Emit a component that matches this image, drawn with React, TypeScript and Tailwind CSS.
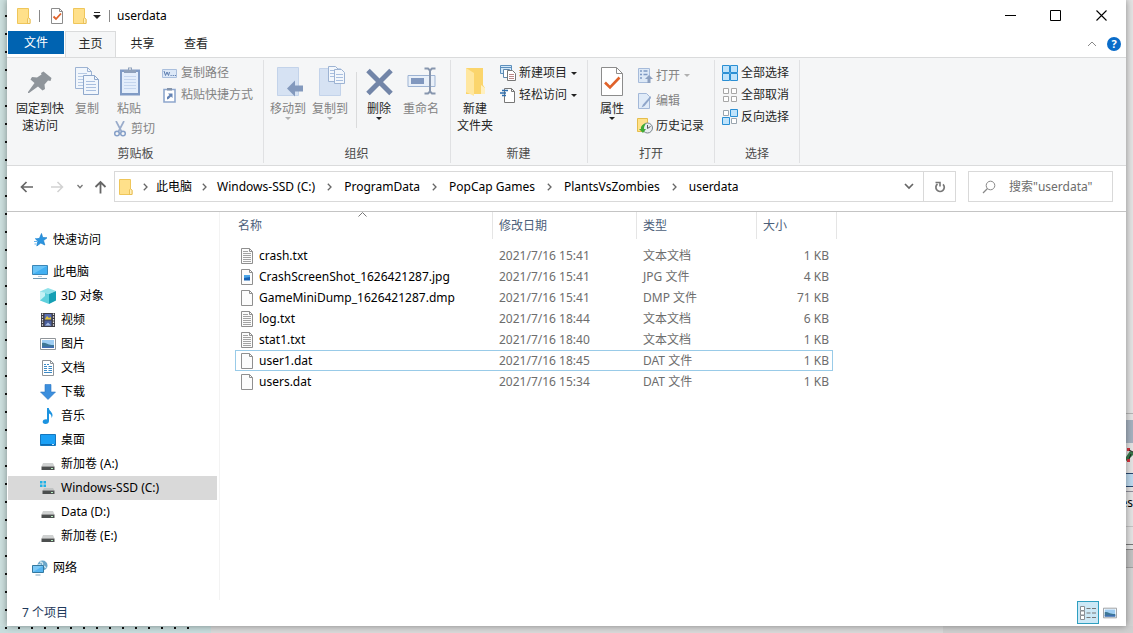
import type { ReactNode } from 'react';
import clsx from 'clsx';

type IconProps = { className?: string };

/* ---------- icons: title bar and address bar ---------- */

const FolderIcon = ({ className = 'h-4 w-4' }: IconProps) => (
  <svg viewBox="0 0 16 16" className={className}>
    <path d="M1.500.5h11v9l1.500 2v4H1.500z" fill="#ffe08a" stroke="#efc65a" />
    <path d="M12.500 9.500l-1 1.500v4.500h2.500v-4z" fill="#fff0bd" stroke="#e5b84a" strokeWidth=".8" />
  </svg>
);

const CheckDocIcon = ({ className = 'h-4 w-4' }: IconProps) => (
  <svg viewBox="0 0 16 16" className={className}>
    <path d="M2.500.5h8l3 3v12h-11z" fill="#fff" stroke="#8c8c8c" />
    <path d="M10.500.5v3h3" fill="none" stroke="#8c8c8c" />
    <path d="M4.500 8.500l2.500 2.500 5-5.500" fill="none" stroke="#e0622a" strokeWidth="1.800" />
  </svg>
);

const Caret = ({ className = 'text-[#222]' }: IconProps) => (
  <svg viewBox="0 0 6 3" className={clsx('h-[3px] w-[6px] shrink-0', className)}>
    <path d="M0 0h6L3 3z" fill="currentColor" />
  </svg>
);

const ChevronRight = () => (
  <svg viewBox="0 0 5 8" className="h-2 w-[5px]">
    <path d="M.8.8L4 4 .8 7.200" fill="none" stroke="#666" strokeWidth="1.300" />
  </svg>
);

/* ---------- icons: ribbon ---------- */

const PinIcon = () => (
  <svg viewBox="0 0 32 32" className="h-8 w-8">
    <path d="M19.500 5.500l8 6.500-1 3-2.500-.5-3.500 4 .5 4.500-2.500 1.500-4.500-4L5 27H4v-1l6.500-9-4-3.500L8 11l5 .5 4.500-3-.5-1.500z" fill="#8f959b" />
  </svg>
);

const CopyIcon = () => (
  <svg viewBox="0 0 32 32" className="h-8 w-8">
    <path d="M4.500 1.500h12l4 4v17h-16z" fill="#f1f6fc" stroke="#9db3d3" />
    <path d="M16.500 1.500v4h4" fill="none" stroke="#9db3d3" />
    <path d="M7 7.500h9M7 10.500h11M7 13.500h11M7 16.500h11M7 19.500h11" stroke="#b7cae4" />
    <path d="M12.500 9.500h11l4 4v15h-15z" fill="#f1f6fc" stroke="#8fa8cc" />
    <path d="M23.500 9.500v4h4" fill="none" stroke="#8fa8cc" />
    <path d="M15 15.500h9M15 18.500h10M15 21.500h10M15 24.500h10" stroke="#a9bfdf" />
  </svg>
);

const PasteIcon = () => (
  <svg viewBox="0 0 32 32" className="h-8 w-8">
    <path d="M7 3.500h20v26H7z" fill="#809bc5" />
    <path d="M9 6h16v21H9z" fill="#e4eefb" />
    <path d="M11 10.500h12M11 13.500h12M11 16.500h12M11 19.500h12M11 22.500h12" stroke="#c5d6ee" />
    <path d="M11 7V4h4V1.500h4V4h4v3z" fill="#8fa1bb" />
    <path d="M16 3h2" stroke="#fff" />
  </svg>
);

const ScissorsIcon = () => (
  <svg viewBox="0 0 16 16" className="h-4 w-4 shrink-0">
    <path d="M4 0l5.500 10.500M12 0L6.500 10.500" stroke="#9aaccb" strokeWidth="1.700" fill="none" />
    <circle cx="5" cy="12.500" r="2.300" fill="none" stroke="#86a0c8" strokeWidth="1.500" />
    <circle cx="11" cy="12.500" r="2.300" fill="none" stroke="#86a0c8" strokeWidth="1.500" />
  </svg>
);

const CopyPathIcon = () => (
  <svg viewBox="0 0 16 16" className="h-4 w-4 shrink-0">
    <path d="M.5 4.500h14v8H.5z" fill="#dce8f7" stroke="#aabfdd" />
    <path d="M2 6l1.500 4.500L5 7l1.500 3.500L7.500 7" fill="none" stroke="#5f7fb0" />
    <path d="M8.500 10.500h1.200M10.700 10.500h1.200M12.800 10.500H14" stroke="#5f7fb0" />
  </svg>
);

const PasteShortcutIcon = () => (
  <svg viewBox="0 0 16 16" className="h-4 w-4 shrink-0">
    <path d="M2 2.500h11v12.500H2z" fill="#fff" stroke="#8ea7cd" strokeWidth="1.600" />
    <path d="M5 1h5v2.500H5z" fill="#8494ab" />
    <path d="M5 12.500V10l2.500-2L6 6.500h4.500V11L9 9.500 6.500 12z" fill="#6282b4" />
  </svg>
);

const MoveToIcon = () => (
  <svg viewBox="0 0 32 32" className="h-8 w-8">
    <path d="M5.500 1.500h21v28h-21z" fill="#d6e2f3" stroke="#c3d3ea" />
    <path d="M15 22.500l8-8v5h8v6h-8v5z" fill="#8399bd" />
  </svg>
);

const CopyToIcon = () => (
  <svg viewBox="0 0 32 32" className="h-8 w-8">
    <path d="M5.500 2.500h21v27h-21z" fill="#d6e2f3" stroke="#c3d3ea" />
    <path d="M14.500.5h7l3 3v12h-10z" fill="#f3f7fc" stroke="#9db3d3" />
    <path d="M20.500 3.500h7l3 3v11h-10z" fill="#f3f7fc" stroke="#9db3d3" />
    <path d="M16 4.500h4M16 7.500h4M16 10.500h4M22 8.500h7M22 11.500h7M22 14.500h7" stroke="#a9bfdf" />
  </svg>
);

const DeleteIcon = () => (
  <svg viewBox="0 0 32 32" className="h-8 w-8">
    <path d="M5 4.500L28 27.500M28 4.500L5 27.500" stroke="#7285a8" strokeWidth="5" />
  </svg>
);

const RenameIcon = () => (
  <svg viewBox="0 0 32 32" className="h-8 w-8">
    <path d="M3 9.500h27v11H3z" fill="#e9f0f9" stroke="#9db3d3" />
    <path d="M6 12h13v6H6z" fill="#8198bf" />
    <path d="M25 4v22M19.500 2.500h3.500l2 2 2-2h3.500M19.500 27.500h3.500l2-2 2 2h3.500" fill="none" stroke="#8796ae" strokeWidth="2" />
  </svg>
);

const NewFolderIcon = () => (
  <svg viewBox="0 0 32 32" className="h-8 w-8">
    <path d="M7 2h17v17l2 3v6H7z" fill="#fbd56c" />
    <path d="M7 2l8 5v23l-8-4z" fill="#ffe7a0" />
    <path d="M22 19v9h4v-6z" fill="#fff0bf" />
  </svg>
);

const NewItemIcon = () => (
  <svg viewBox="0 0 16 16" className="h-4 w-4 shrink-0">
    <path d="M.5.5h11v8H.5z" fill="#d2e8f9" stroke="#5c8fbd" />
    <path d="M.5 2.500h11" stroke="#5c8fbd" />
    <path d="M3.500 4.500h6v8h-6z" fill="#fff" stroke="#5f87ac" />
    <path d="M7.500 5.500h5l3 3v7h-8z" fill="#fff" stroke="#777" />
    <path d="M9 9.500h5M9 11.500h5M9 13.500h5" stroke="#b88" />
  </svg>
);

const EasyAccessIcon = () => (
  <svg viewBox="0 0 16 16" className="h-4 w-4 shrink-0">
    <path d="M4.500 1.500h7l3 3v11h-10z" fill="#fff" stroke="#777" />
    <path d="M11.500 1.500v3h3" fill="none" stroke="#777" />
    <path d="M2 3.500h6M0 6h6M2 8.500h4" stroke="#2f6fae" strokeWidth="1.300" />
  </svg>
);

const PropertiesIcon = () => (
  <svg viewBox="0 0 32 32" className="h-8 w-8">
    <path d="M5.500 1.500h15l6 6v22h-21z" fill="#fff" stroke="#8c8c8c" />
    <path d="M20.500 1.500v6h6" fill="none" stroke="#8c8c8c" />
    <path d="M9 16.500l5 5 9.500-10" fill="none" stroke="#e0622a" strokeWidth="2.600" />
  </svg>
);

const OpenIcon = () => (
  <svg viewBox="0 0 16 16" className="h-4 w-4 shrink-0">
    <path d="M1.500.5h11v14h-11z" fill="#dde9f7" stroke="#a6bbda" />
    <path d="M3 3h2M3 6.500h2M3 10h2M6.500 3h4M6.500 6.500h4" stroke="#7f9ac4" strokeWidth="1.600" />
    <path d="M12 7l4 4h-2.500v4h-3v-4H8z" fill="#8ca0c0" />
  </svg>
);

const EditIcon = () => (
  <svg viewBox="0 0 16 16" className="h-4 w-4 shrink-0">
    <path d="M1.500.5h8l3 3v12h-11z" fill="#e0ebf8" stroke="#a3b8d8" />
    <path d="M13.500 3L6 11.500l-1.500 3 3-1.500L14 5z" fill="#8fa6ca" />
  </svg>
);

const HistoryIcon = () => (
  <svg viewBox="0 0 16 16" className="h-4 w-4 shrink-0">
    <path d="M.5.5h10v13H.5z" fill="#ffe28a" stroke="#e5bd4c" />
    <circle cx="10.500" cy="10" r="5" fill="#e8edf0" stroke="#7b858c" />
    <path d="M10.500 7v3.500l3-2" fill="none" stroke="#555" />
    <path d="M9 5.500C5 6 3.500 9 4 11H2l4 4 3-4H7c0-2 .5-3.500 2-5.500z" fill="#3faa36" />
  </svg>
);

const SelectAllIcon = () => (
  <svg viewBox="0 0 16 16" className="h-4 w-4 shrink-0">
    <path d="M.5.5h7v7h-7zM8.500.5h7v7h-7zM.5 8.500h7v7h-7zM8.500 8.500h7v7h-7z" fill="#bfe3fb" stroke="#2a8fd4" />
  </svg>
);

const SelectNoneIcon = () => (
  <svg viewBox="0 0 16 16" className="h-4 w-4 shrink-0">
    <path d="M1.500 1.500h5v5h-5zM9.500 1.500h5v5h-5zM1.500 9.500h5v5h-5zM9.500 9.500h5v5h-5z" fill="#fff" stroke="#a7a7a7" />
  </svg>
);

const InvertIcon = () => (
  <svg viewBox="0 0 16 16" className="h-4 w-4 shrink-0">
    <path d="M1.500 1.500h5v5h-5zM9.500 9.500h5v5h-5z" fill="#fff" stroke="#9aa5ae" />
    <path d="M8.500.5h7v7h-7zM.5 8.500h7v7h-7z" fill="#bfe3fb" stroke="#2a8fd4" />
  </svg>
);

/* ---------- icons: navigation tree ---------- */

const StarIcon = () => (
  <svg viewBox="0 0 16 16" className="h-4 w-4">
    <path d="M9.500 1.500l1.200 4 4.300.3-3.500 2.800 1.300 4.400-4-2-4 3 1-4.700-2-2.300 3.700-.7z" fill="#2b95e0" stroke="#1c7fca" strokeWidth=".7" />
    <path d="M2 9.500h3M2.500 12h2M3 6.500h2" stroke="#63b3ee" />
  </svg>
);

const ComputerIcon = () => (
  <svg viewBox="0 0 16 16" className="h-4 w-4">
    <path d="M.5 1.500h15v9H.5z" fill="#42b0f2" stroke="#3a87b8" />
    <path d="M1 2h14L1 10z" fill="#7accf8" opacity=".7" />
    <path d="M1 14.500h14" stroke="#7299b3" />
    <path d="M6 12.500h4" stroke="#b8cbd8" />
  </svg>
);

const CubeIcon = () => (
  <svg viewBox="0 0 16 16" className="h-4 w-4">
    <path d="M0 3.500L8 0l8 3-7 3z" fill="#8fe2ea" />
    <path d="M0 3.500L9 6v10l-9-3.500z" fill="#5fd0dc" />
    <path d="M16 3L9 6v10l7-3.500z" fill="#149fb4" />
    <path d="M0 12.500L5 8V4.800L0 3.500z" fill="#c3f1f4" />
  </svg>
);

const VideoIcon = () => (
  <svg viewBox="0 0 16 16" className="h-4 w-4">
    <path d="M1 1h14v14H1z" fill="#3c3c44" />
    <path d="M2.500 1.500v13M13.500 1.500v13" stroke="#e6e6e6" strokeWidth="1.200" strokeDasharray="1.500 1.200" />
    <path d="M4.500 2h7v5.500h-7z" fill="#5a6fb2" />
    <path d="M4.500 8.500h7V14h-7z" fill="#4a5f9c" />
    <path d="M5 7l2-3 2 2 2-1v2.500H5z" fill="#e0c23a" />
    <path d="M5 13.500l3-3 3 3z" fill="#a8bde4" />
  </svg>
);

const PictureIcon = ({ className = 'h-4 w-4' }: IconProps) => (
  <svg viewBox="0 0 16 16" className={className}>
    <path d="M.5 2.500h15v11H.5z" fill="#fff" stroke="#8f9499" />
    <path d="M2 4h12v8H2z" fill="#9ecdf3" />
    <path d="M2 7c3-1 5 1 7 1.500s3 .5 5 .5v3H2z" fill="#3e7796" />
    <path d="M2 10.500h12V12H2z" fill="#3f6db5" />
  </svg>
);

const DocumentIcon = () => (
  <svg viewBox="0 0 16 16" className="h-4 w-4">
    <path d="M2.500.5h8l3 3v12h-11z" fill="#fff" stroke="#8f9499" />
    <path d="M10.500.5v3h3" fill="none" stroke="#8f9499" />
    <path d="M4 4.500h2M7 4.500h2M4 6.500h3M8.500 6.500H12M4 8.500h3M8.500 8.500H12M4 10.500h3M8.500 10.500H12M4 12.500h8" stroke="#3d8ac6" />
  </svg>
);

const DownloadIcon = () => (
  <svg viewBox="0 0 16 16" className="h-4 w-4">
    <path d="M5 .5h6V8h4.500L8 15.500.5 8H5z" fill="#3c8fdd" stroke="#2a76c2" strokeWidth=".6" />
  </svg>
);

const MusicIcon = () => (
  <svg viewBox="0 0 16 16" className="h-4 w-4">
    <path d="M7 0h1.800c.2 3 4 4 3.700 7.500-.2 1.500-1 2.500-1 2.500.3-3-1.200-4-2.500-4.500V13c0 1.800-1.500 3-3.500 3S2.500 15 2.700 13.500 5 11 7 11.500z" fill="#1c93e0" />
  </svg>
);

const DesktopIcon = () => (
  <svg viewBox="0 0 16 16" className="h-4 w-4">
    <path d="M.5 2.500h15v11H.5z" fill="#1ba0f5" stroke="#1677bd" />
    <path d="M1 12.500h14" stroke="#0d6cb3" />
    <path d="M12 12.500h2" stroke="#bfe3fb" />
  </svg>
);

const DriveIcon = () => (
  <svg viewBox="0 0 16 16" className="h-4 w-4">
    <path d="M3 7h10l1.500 3.500h-13z" fill="#cfd1d1" />
    <path d="M1.500 10.500h13V14h-13z" fill="#4c4f4f" />
    <path d="M11 12.500h2" stroke="#b8f0c0" />
  </svg>
);

const SystemDriveIcon = () => (
  <svg viewBox="0 0 16 16" className="h-4 w-4">
    <path d="M0 1h2.500v2.500H0zM3.500 1H6v2.500H3.500zM0 4.500h2.500V7H0zM3.500 4.500H6V7H3.500z" fill="#1fb1e6" />
    <path d="M4 8h9l1.500 2.500h-12z" fill="#c0c3c3" />
    <path d="M2.500 10.500h12V14h-12z" fill="#4c4f4f" />
    <path d="M11 12.500h2" stroke="#b8f0c0" />
  </svg>
);

const NetworkIcon = () => (
  <svg viewBox="0 0 16 16" className="h-4 w-4">
    <circle cx="10.500" cy="5.500" r="5" fill="#6aa6c9" />
    <path d="M8 2c2 0 3 1 2.500 2.500S13 6 14 8M6 5l3-1" fill="none" stroke="#cfe6ee" strokeWidth="1.300" />
    <path d="M.5 5.500h11v7H.5z" fill="#54b4f0" stroke="#33789f" />
    <path d="M1 6h10L1 12z" fill="#8fd2f8" opacity=".7" />
    <path d="M3.500 15h5" stroke="#7ea5bd" />
  </svg>
);

/* ---------- icons: file list ---------- */

const FileIcon = ({ kind }: { kind: 'text' | 'image' | 'blank' }) => (
  <svg viewBox="0 0 16 16" className="h-4 w-4 shrink-0">
    <path d="M2.500.5h8l3 3v12h-11z" fill="#fcfcfc" stroke="#8f8f8f" />
    <path d="M10.500.5v3h3" fill="none" stroke="#8f8f8f" />
    {kind === 'text' && <path d="M4 3.500h5M4 5.500h8M4 7.500h8M4 9.500h8M4 11.500h8M4 13.500h8" stroke="#a3a3a3" />}
    {kind === 'image' && (
      <>
        <path d="M5 6h6v5.500H5z" fill="#1762b5" />
        <path d="M5 6h6v2L5 9z" fill="#4ba5e8" />
      </>
    )}
  </svg>
);

/* ---------- data ---------- */

const crumbs = ['此电脑', 'Windows-SSD (C:)', 'ProgramData', 'PopCap Games', 'PlantsVsZombies', 'userdata'];

const places = [
  { name: '3D 对象', icon: <CubeIcon /> },
  { name: '视频', icon: <VideoIcon /> },
  { name: '图片', icon: <PictureIcon /> },
  { name: '文档', icon: <DocumentIcon /> },
  { name: '下载', icon: <DownloadIcon /> },
  { name: '音乐', icon: <MusicIcon /> },
  { name: '桌面', icon: <DesktopIcon /> },
  { name: '新加卷 (A:)', icon: <DriveIcon /> },
  { name: 'Windows-SSD (C:)', icon: <SystemDriveIcon />, selected: true },
  { name: 'Data (D:)', icon: <DriveIcon /> },
  { name: '新加卷 (E:)', icon: <DriveIcon /> }
];

const files = [
  { name: 'crash.txt', date: '2021/7/16 15:41', type: '文本文档', size: '1 KB', kind: 'text' },
  { name: 'CrashScreenShot_1626421287.jpg', date: '2021/7/16 15:41', type: 'JPG 文件', size: '4 KB', kind: 'image' },
  { name: 'GameMiniDump_1626421287.dmp', date: '2021/7/16 15:41', type: 'DMP 文件', size: '71 KB', kind: 'blank' },
  { name: 'log.txt', date: '2021/7/16 18:44', type: '文本文档', size: '6 KB', kind: 'text' },
  { name: 'stat1.txt', date: '2021/7/16 18:40', type: '文本文档', size: '1 KB', kind: 'text' },
  { name: 'user1.dat', date: '2021/7/16 18:45', type: 'DAT 文件', size: '1 KB', kind: 'blank', focused: true },
  { name: 'users.dat', date: '2021/7/16 15:34', type: 'DAT 文件', size: '1 KB', kind: 'blank' }
] as const;

/* ---------- building blocks ---------- */

type LargeButtonProps = {
  icon: ReactNode;
  lines: string[];
  className: string;
  disabled?: boolean;
  menu?: boolean;
};

const LargeButton = ({ icon, lines, className, disabled, menu }: LargeButtonProps) => (
  <button
    disabled={disabled}
    className={clsx('flex flex-col items-center leading-[17px]', disabled ? 'text-[#838383]' : 'text-[#262626]', className)}
  >
    {icon}
    <span className="mt-0.5 flex flex-col items-center whitespace-nowrap">
      {lines.map((line) => (
        <span key={line}>{line}</span>
      ))}
    </span>
    {menu && <Caret className={disabled ? 'text-[#b0b0b0]' : 'text-[#222]'} />}
  </button>
);

type SmallButtonProps = {
  icon: ReactNode;
  label: string;
  disabled?: boolean;
  menu?: boolean;
  tall?: boolean;
};

const SmallButton = ({ icon, label, disabled, menu, tall }: SmallButtonProps) => (
  <button
    disabled={disabled}
    className={clsx(
      'flex items-center gap-[3px] whitespace-nowrap',
      tall ? 'h-[25px]' : 'h-[22px]',
      disabled ? 'text-[#838383]' : 'text-[#262626]'
    )}
  >
    {icon}
    <span>{label}</span>
    {menu && (
      <span className="ml-px">
        <Caret className={disabled ? 'text-[#b0b0b0]' : 'text-[#222]'} />
      </span>
    )}
  </button>
);

const RibbonGroup = ({ label, className, children }: { label: string; className: string; children: ReactNode }) => (
  <section aria-label={label} className={clsx('flex flex-col', className)}>
    <div className="flex flex-1">{children}</div>
    <div className="h-[21px] text-center leading-5 text-[#4a4a4a]">{label}</div>
  </section>
);

const GroupDivider = () => <div className="mb-0.5 mt-0.5 w-px bg-[#e0e1e3]" />;

/* ---------- window parts ---------- */

const TitleBar = () => (
  <header className="flex h-[31px] items-center pl-[9px] pr-px text-[#222]">
    <FolderIcon />
    <div className="ml-[7px] h-3 w-px bg-[#888]" />
    <button aria-label="属性" className="ml-[9px]">
      <CheckDocIcon />
    </button>
    <button aria-label="新建文件夹" className="ml-[7px]">
      <FolderIcon />
    </button>
    <button aria-label="自定义快速访问工具栏" className="ml-[5px]">
      <svg viewBox="0 0 8 7" className="h-[7px] w-2">
        <path d="M1 .5h6" stroke="#222" />
        <path d="M0 3h8L4 7z" fill="#222" />
      </svg>
    </button>
    <div className="ml-2 h-3 w-px bg-[#888]" />
    <h1 className="ml-[7px] flex-1 text-[12px] text-black">userdata</h1>
    <button aria-label="最小化" className="flex w-[46px] justify-center">
      <svg viewBox="0 0 11 11" className="h-[11px] w-[11px]">
        <path d="M0 5.500h11" stroke="#000" />
      </svg>
    </button>
    <button aria-label="最大化" className="flex w-[45px] justify-center">
      <svg viewBox="0 0 11 11" className="h-[11px] w-[11px]">
        <path d="M.5.5h10v10H.5z" fill="none" stroke="#000" />
      </svg>
    </button>
    <button aria-label="关闭" className="flex w-[47px] justify-center">
      <svg viewBox="0 0 11 11" className="h-[11px] w-[11px]">
        <path d="M.5.5l10 10M10.500.5l-10 10" stroke="#000" strokeWidth="1.100" />
      </svg>
    </button>
  </header>
);

const Tabs = () => (
  <div className="flex h-[26px] pl-px text-[#262626]">
    <button className="h-[23px] w-14 bg-[#0063b1] text-white">文件</button>
    <button className="-mb-px ml-px h-[27px] w-[51px] border border-b-0 border-[#dadbdc] bg-[#f5f6f7] pb-0.5">主页</button>
    <button className="w-[53px] pb-px">共享</button>
    <button className="w-[54px] pb-px">查看</button>
    <div className="flex-1" />
    <button aria-label="最小化功能区" className="mr-2.5">
      <svg viewBox="0 0 10 6" className="h-1.5 w-2.5">
        <path d="M1 5l4-4 4 4" fill="none" stroke="#888" />
      </svg>
    </button>
    <button
      aria-label="帮助"
      className="mr-[5px] h-3.5 w-3.5 self-center rounded-full bg-[#0a6cc9] text-[11px] font-bold leading-[14px] text-white"
    >
      ?
    </button>
  </div>
);

const Ribbon = () => (
  <div className="flex h-[109px] border-y border-[#dadbdc] bg-[#f5f6f7] pl-px">
    <RibbonGroup label="剪贴板" className="w-[255px]">
      <LargeButton icon={<PinIcon />} lines={['固定到快', '速访问']} className="w-16 pt-2" />
      <LargeButton icon={<CopyIcon />} lines={['复制']} className="w-[30px] pt-2" disabled />
      <div className="ml-2.5 flex w-[50px] flex-col items-start">
        <LargeButton icon={<PasteIcon />} lines={['粘贴']} className="w-[34px] pb-px pt-2" disabled />
        <SmallButton icon={<ScissorsIcon />} label="剪切" disabled />
      </div>
      <div className="pt-1">
        <SmallButton icon={<CopyPathIcon />} label="复制路径" disabled />
        <SmallButton icon={<PasteShortcutIcon />} label="粘贴快捷方式" disabled />
      </div>
    </RibbonGroup>
    <GroupDivider />
    <RibbonGroup label="组织" className="w-[186px] pr-px">
      <LargeButton icon={<MoveToIcon />} lines={['移动到']} className="ml-[3px] w-[42px] pt-2" disabled menu />
      <LargeButton icon={<CopyToIcon />} lines={['复制到']} className="w-[42px] pt-2" disabled menu />
      <div className="ml-[5px] mt-3.5 h-14 w-px bg-[#dadbdc]" />
      <LargeButton icon={<DeleteIcon />} lines={['删除']} className="w-11 pt-2" menu />
      <LargeButton icon={<RenameIcon />} lines={['重命名']} className="w-10 pt-2" disabled />
    </RibbonGroup>
    <GroupDivider />
    <RibbonGroup label="新建" className="w-[136px] pr-px">
      <LargeButton icon={<NewFolderIcon />} lines={['新建', '文件夹']} className="w-12 pt-2" />
      <div className="ml-px pt-1">
        <SmallButton icon={<NewItemIcon />} label="新建项目" menu />
        <SmallButton icon={<EasyAccessIcon />} label="轻松访问" menu />
      </div>
    </RibbonGroup>
    <GroupDivider />
    <RibbonGroup label="打开" className="w-[126px]">
      <LargeButton icon={<PropertiesIcon />} lines={['属性']} className="w-12 pt-2" menu />
      <div className="ml-px pt-[5px]">
        <SmallButton icon={<OpenIcon />} label="打开" disabled menu tall />
        <SmallButton icon={<EditIcon />} label="编辑" disabled tall />
        <SmallButton icon={<HistoryIcon />} label="历史记录" tall />
      </div>
    </RibbonGroup>
    <GroupDivider />
    <RibbonGroup label="选择" className="w-[84px]">
      <div className="pl-[7px] pt-1">
        <SmallButton icon={<SelectAllIcon />} label="全部选择" />
        <SmallButton icon={<SelectNoneIcon />} label="全部取消" />
        <SmallButton icon={<InvertIcon />} label="反向选择" />
      </div>
    </RibbonGroup>
    <GroupDivider />
  </div>
);

const AddressBar = () => (
  <div className="flex h-[46px] items-center border-b border-[#c4c4c4] px-[13px] pb-1">
    <button aria-label="后退">
      <svg viewBox="0 0 14 12" className="h-3 w-3.5">
        <path d="M13 6H1.500M6.500 1l-5 5 5 5" fill="none" stroke="#666" strokeWidth="1.700" />
      </svg>
    </button>
    <button aria-label="前进" disabled className="ml-4">
      <svg viewBox="0 0 14 12" className="h-3 w-3.5">
        <path d="M1 6h11.500M7.500 1l5 5-5 5" fill="none" stroke="#d2d2d2" strokeWidth="1.500" />
      </svg>
    </button>
    <button aria-label="最近浏览的位置" className="ml-[13px]">
      <svg viewBox="0 0 6 5" className="h-[5px] w-1.5">
        <path d="M.5 1L3 3.700 5.500 1" fill="none" stroke="#777" strokeWidth="1.300" />
      </svg>
    </button>
    <button aria-label="上移" className="ml-[11px]">
      <svg viewBox="0 0 13 14" className="h-3.5 w-[13px]">
        <path d="M6.500 13.500V2M1.500 7l5-5 5 5" fill="none" stroke="#666" strokeWidth="1.800" />
      </svg>
    </button>
    <div className="ml-[7px] flex h-[31px] flex-1 border border-[#d9d9d9]">
      <nav aria-label="路径" className="flex flex-1 items-center pl-[3px]">
        <FolderIcon />
        {crumbs.map((crumb, index) => (
          <div key={crumb} className="flex items-center">
            <span className={clsx('flex justify-center', index === 0 ? 'w-[22px]' : index === 1 ? 'w-[25px]' : 'w-[29px]')}>
              <ChevronRight />
            </span>
            <button className="whitespace-nowrap text-black">{crumb}</button>
          </div>
        ))}
      </nav>
      <button aria-label="以前的位置" className="flex w-[29px] items-center justify-center">
        <svg viewBox="0 0 10 7" className="h-[7px] w-2.5">
          <path d="M1 1l4 4 4-4" fill="none" stroke="#666" strokeWidth="1.700" />
        </svg>
      </button>
      <button aria-label="刷新" className="flex w-8 items-center justify-center border-l border-[#d9d9d9]">
        <svg viewBox="0 0 12 12" className="h-3 w-3">
          <path d="M9 3.300a4.200 4.200 0 1 1-5.500-.3" fill="none" stroke="#777" strokeWidth="1.700" />
          <path d="M1.500 1.500H6v4" fill="none" stroke="#777" strokeWidth="1.600" />
        </svg>
      </button>
    </div>
    <label className="ml-3 flex h-[31px] w-[145px] items-center border border-[#d9d9d9] pl-[13px]">
      <svg viewBox="0 0 14 14" className="h-3.5 w-3.5 shrink-0">
        <circle cx="8.500" cy="5.500" r="4.300" fill="none" stroke="#888" />
        <path d="M5.500 8.500L1 13" stroke="#888" strokeWidth="1.200" />
      </svg>
      <input
        aria-label="搜索"
        placeholder='搜索"userdata"'
        className="ml-[13px] w-full min-w-0 outline-none placeholder:text-[#6d6d6d] placeholder:opacity-100"
      />
    </label>
  </div>
);

type TreeItemProps = { icon: ReactNode; name: string; nested?: boolean; selected?: boolean };

const TreeItem = ({ icon, name, nested, selected }: TreeItemProps) => (
  <li>
    <button
      className={clsx(
        'flex h-6 w-full items-center gap-[5px] whitespace-nowrap text-black',
        nested ? 'pl-8' : 'pl-6',
        selected && 'bg-[#d9d9d9]'
      )}
    >
      {icon}
      {name}
    </button>
  </li>
);

const NavigationTree = () => (
  <nav aria-label="导航窗格" className="w-[213px] shrink-0 border-r border-[#f3f3f3] pl-px pr-0.5 pt-4">
    <ul>
      <TreeItem icon={<StarIcon />} name="快速访问" />
    </ul>
    <ul className="mt-2">
      <TreeItem icon={<ComputerIcon />} name="此电脑" />
      {places.map((place) => (
        <TreeItem key={place.name} icon={place.icon} name={place.name} selected={place.selected} nested />
      ))}
    </ul>
    <ul className="mt-2">
      <TreeItem icon={<NetworkIcon />} name="网络" />
    </ul>
  </nav>
);

const FileTable = () => (
  <main className="flex-1 pl-[15px]">
    <table className="w-[598px] table-fixed text-left">
      <colgroup>
        <col className="w-[258px]" />
        <col className="w-36" />
        <col className="w-[120px]" />
        <col className="w-[76px]" />
      </colgroup>
      <thead className="text-[#4c607a]">
        <tr>
          <th className="relative p-0 font-normal">
            <div className="h-[27px] border-r border-[#e5e5e5] pl-[3px] leading-[27px]">名称</div>
            <svg viewBox="0 0 9 5" className="absolute left-[123px] top-0 h-[5px] w-[9px]">
              <path d="M.5 4.500l4-4 4 4" fill="none" stroke="#777" />
            </svg>
          </th>
          <th className="p-0 font-normal">
            <div className="h-[27px] border-r border-[#e5e5e5] pl-1.5 leading-[27px]">修改日期</div>
          </th>
          <th className="p-0 font-normal">
            <div className="h-[27px] border-r border-[#e5e5e5] pl-1.5 leading-[27px]">类型</div>
          </th>
          <th className="p-0 font-normal">
            <div className="mr-[-4px] h-[27px] border-r border-[#e5e5e5] pl-1.5 leading-[27px]">大小</div>
          </th>
        </tr>
      </thead>
      <tbody className="text-[#6d6d6d] before:block before:h-1.5">
        {files.map((file) => (
          <tr
            key={file.name}
            className={clsx('h-[21px]', 'focused' in file && 'outline outline-1 -outline-offset-1 outline-[#99cbe8]')}
          >
            <td className="p-0">
              <div className="flex items-center gap-1 whitespace-nowrap pl-1 text-black">
                <FileIcon kind={file.kind} />
                {file.name}
              </div>
            </td>
            <td className="whitespace-nowrap p-0 pl-1.5">{file.date}</td>
            <td className="whitespace-nowrap p-0 pl-1.5">{file.type}</td>
            <td className="whitespace-nowrap p-0 pr-1 text-right">{file.size}</td>
          </tr>
        ))}
      </tbody>
    </table>
  </main>
);

const StatusBar = () => (
  <footer className="flex h-[26px] items-center pb-px pl-[15px] pr-[9px] text-[#1e395b]">
    <span className="flex-1">7 个项目</span>
    <button
      aria-label="详细信息"
      className="flex h-[23px] w-[22px] items-center justify-center border border-[#2f9fc0] bg-[#cce8f6]"
    >
      <svg viewBox="0 0 18 14" className="h-3.5 w-[18px]">
        <path d="M1.500.5h4v4h-4zM1.500 5h4v4h-4zM1.500 9.500h4v4h-4z" fill="#fff" stroke="#8a8f94" />
        <path d="M7.500 2.500h4M13 2.500h4M7.500 7h4M13 7h4M7.500 11.500h4M13 11.500h4" stroke="#777" />
      </svg>
    </button>
    <button aria-label="大缩略图" className="ml-1">
      <PictureIcon className="h-3.5 w-3.5" />
    </button>
  </footer>
);

/* Slices of the desktop that stay visible around the window. */

const RightEdge = () => (
  <div aria-hidden className="w-[7px] shrink-0 bg-[#e3e3e3]">
    <div className="h-[414px] border-b border-[#b5b5b5]" />
    <div className="h-1.5" />
    <div className="h-[23px] bg-[#a5b1bf]" />
    <svg viewBox="0 0 7 30" className="h-[30px] w-[7px]">
      <path d="M0 14l4-6 3 1v3l-4 4-3 2z" fill="#37784a" />
      <path d="M1 5h3v3H1zM1 16h3v3H1z" fill="#d6333e" />
      <path d="M3 7l4 2M3 16l2-5" stroke="#222" />
    </svg>
    <div className="h-3.5 border-y border-[#27476f] bg-[#bcd9ee]" />
    <div className="h-[5px] border-b border-[#8d8d99]" />
    <div className="flex h-[35px] justify-end border-b border-[#c4c4c4] pt-[3px] text-black">es</div>
    <div className="h-[18px] border-b border-[#777]" />
    <div className="h-[5px] border-b border-[#888]" />
    <div className="h-[18px] border-b border-[#a0a0a0] bg-[#c2c2c2]" />
    <div className="h-[58px] bg-[#d3d3d3]" />
  </div>
);

const App = () => (
  <div className="flex min-h-screen flex-col bg-[#d5d5d5] font-['Noto_Sans','Noto_Sans_CJK_SC',sans-serif] text-[12px] leading-4">
    <div className="flex flex-1">
      <div
        aria-hidden
        className="w-[7px] shrink-0 bg-[#cde0df] bg-[radial-gradient(circle_at_6px_16px,#111_1px,transparent_1.500px)] bg-[length:7px_18px]"
      />
      <div className="z-10 flex min-w-0 flex-1 flex-col bg-white shadow-[0_0_7px_rgba(0,0,0,0.4)]">
        <TitleBar />
        <Tabs />
        <Ribbon />
        <AddressBar />
        <div className="flex flex-1">
          <NavigationTree />
          <FileTable />
        </div>
        <StatusBar />
      </div>
      <RightEdge />
    </div>
    <div aria-hidden className="flex h-[7px]">
      <div className="w-[195px] bg-[#c8dddd] bg-[radial-gradient(circle_at_6px_2px,#111_1px,transparent_1px)] bg-[length:13px_7px]" />
      <div className="w-4 bg-[#c8dddd]" />
      <div className="flex-1 bg-[#d9d9d9]" />
      <div className="w-[190px] bg-[#cfcfcf]" />
    </div>
  </div>
);

export default App;
